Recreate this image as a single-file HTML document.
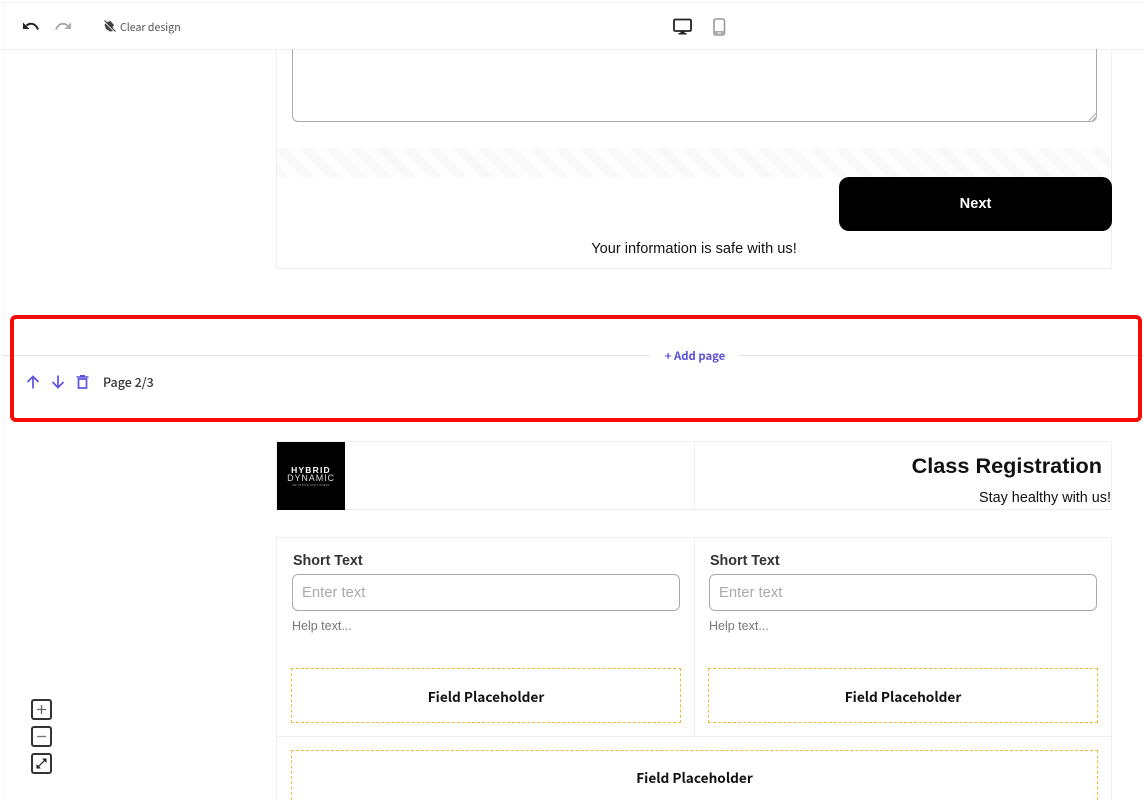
<!DOCTYPE html>
<html><head><meta charset="utf-8">
<style>
html,body{margin:0;padding:0;background:#fff;width:1144px;height:800px;overflow:hidden;}
#w{width:1144px;height:800px;position:relative;overflow:hidden;font-family:"Liberation Sans",sans-serif;filter:blur(.3px);background:#fff;}
.a{position:absolute;box-sizing:border-box;white-space:nowrap;}
.ui{font-family:"Noto Sans CJK SC","Liberation Sans",sans-serif;}
.box{border:1px solid #efefef;}
.lab{font-weight:bold;font-size:14.3px;color:#333;line-height:18px;}
.inp{height:37px;border:1.3px solid #aaa;border-radius:6px;background:#fff;color:#aaa;font-size:14.800px;line-height:36px;padding-left:9px;}
.help{font-size:12.500px;color:#777;line-height:16px;}
.ph{border:1px dashed #f5b93a;height:55px;text-align:center;font-weight:bold;font-size:13.650px;color:#111;line-height:55px;font-family:"Noto Sans CJK SC","Liberation Sans",sans-serif;}
svg{position:absolute;overflow:visible;}
.zb{left:31px;width:21px;height:21px;border:2px solid #333;border-radius:3px;background:#fff;}
</style></head><body><div id="w">

<!-- page edges -->
<div class="a" style="left:0;top:2px;width:1144px;height:1px;background:#f3f3f3"></div>
<div class="a" style="left:3px;top:0;width:1px;height:800px;background:#f7f7f7"></div>
<div class="a" style="left:0;top:49px;width:1144px;height:1px;background:#efefef"></div>

<!-- form part 1 -->
<div class="a box" style="left:276px;top:49px;width:836px;height:220px;border-top:0"></div>
<div class="a" style="left:292px;top:49px;width:805px;height:73px;border:1.3px solid #aaa;border-top:0;border-radius:0 0 6px 6px"></div>
<svg style="left:1089px;top:113px" width="8" height="8"><path d="M0 7.500L7.500 0M3.500 7.500L7.500 3.500" stroke="#aaa" stroke-width="1" fill="none"/></svg>
<div class="a" style="left:277px;top:148px;width:834px;height:29px;background:repeating-linear-gradient(45deg,#f9f9f9 0,#f9f9f9 9px,#fdfdfd 9px,#fdfdfd 18px)"></div>
<div class="a" style="left:839px;top:177px;width:273px;height:54px;background:#000;border-radius:10px;color:#fff;font-weight:bold;font-size:14.600px;text-align:center;line-height:54px">Next</div>
<div class="a" style="left:277px;top:240px;width:834px;text-align:center;font-size:14.600px;line-height:18px;color:#111">Your information is safe with us!</div>

<!-- toolbar -->
<div class="a" style="left:0;top:3px;width:1144px;height:46px;background:#fff"></div>
<div class="a" style="left:3px;top:3px;width:1px;height:46px;background:#f7f7f7"></div>
<svg style="left:22px;top:20px" width="18" height="14" viewBox="0 0 18 14"><path d="M4.500 5.500C8 2.500 13.500 3 16 9.500" stroke="#222" stroke-width="2" fill="none"/><path d="M1 2.500V9H7.500Z" fill="#222"/></svg>
<svg style="left:54px;top:20px" width="18" height="14" viewBox="0 0 18 14"><path d="M13.500 5.500C10 2.500 4.500 3 2 9.500" stroke="#aaa" stroke-width="2" fill="none"/><path d="M17 2.500V9H10.500Z" fill="#aaa"/></svg>
<svg style="left:103px;top:20px" width="13" height="13" viewBox="0 0 13 13"><path d="M3 2.500L7.500 1 11 5 9 8.500 11 11 7 11.500 3 9 1.500 5Z" fill="#444"/><path d="M1 1L12 12" stroke="#fff" stroke-width="1.300"/><path d="M1.500 .5L12.500 11.500" stroke="#333" stroke-width="1.100"/></svg>
<div class="a ui" style="left:120px;top:20px;font-size:10.600px;line-height:16px;color:#555">Clear design</div>
<svg style="left:673px;top:18px" width="19" height="18" viewBox="0 0 19 18"><rect x="1" y="1.500" width="17" height="11.500" rx="1.200" fill="#fff" stroke="#222" stroke-width="1.800"/><path d="M7.500 13H11.500V15H13.500V16.500H5.500V15H7.500Z" fill="#222"/></svg>
<svg style="left:713px;top:18px" width="13" height="18" viewBox="0 0 13 18"><rect x="1" y="1" width="10.500" height="16" rx="1.800" fill="#fff" stroke="#999" stroke-width="1.600"/><rect x="1" y="13" width="10.500" height="4" rx="1" fill="#aaa"/><rect x="4.500" y="14.500" width="3.500" height="1" fill="#fff"/></svg>

<!-- red highlighted divider -->
<div class="a" style="left:4px;top:355px;width:646px;height:1px;background:#e4e4e4"></div>
<div class="a" style="left:738px;top:355px;width:406px;height:1px;background:#e4e4e4"></div>
<div class="a ui" style="left:650px;top:348px;width:90px;text-align:center;font-size:11.300px;font-weight:bold;line-height:17px;color:#5a4fd8">+ Add page</div>
<svg style="left:26px;top:375px" width="14" height="14" viewBox="0 0 14 14"><path d="M7 13.500V1.500M1.500 7L7 1.500 12.500 7" stroke="#5b52dc" stroke-width="1.700" fill="none"/></svg>
<svg style="left:51px;top:375px" width="14" height="14" viewBox="0 0 14 14"><path d="M7 .5V12.500M1.500 7L7 12.500 12.500 7" stroke="#5b52dc" stroke-width="1.700" fill="none"/></svg>
<svg style="left:76px;top:375px" width="13" height="14" viewBox="0 0 13 14"><path d="M0.500 2H12.500M4 .8H9" stroke="#5b52dc" stroke-width="1.500" fill="none"/><rect x="2.500" y="4" width="8" height="9" fill="none" stroke="#5b52dc" stroke-width="1.700"/></svg>
<div class="a ui" style="left:103px;top:373px;font-size:12.500px;font-weight:500;line-height:17px;color:#333">Page 2/3</div>
<div class="a" style="left:10px;top:315px;width:1132px;height:107px;border:4px solid #f40a0a;border-radius:6px"></div>

<!-- header of page 2 -->
<div class="a box" style="left:276px;top:441px;width:419px;height:69px"></div>
<div class="a box" style="left:694px;top:441px;width:418px;height:69px"></div>
<div class="a" style="left:277px;top:442px;width:68px;height:68px;background:#000;color:#fff;text-align:center">
  <div style="font-size:8.500px;font-weight:bold;letter-spacing:1.200px;line-height:8px;margin-top:24px">HYBRID</div>
  <div style="font-size:9px;letter-spacing:.9px;line-height:9px;color:#ddd">DYNAMIC</div>
  <div style="font-size:2.500px;letter-spacing:.3px;line-height:5px;color:#aaa">WE STRIVE FOR FITNESS</div>
</div>
<div class="a" style="left:800px;top:453px;width:302px;text-align:right;font-size:21.700px;font-weight:bold;line-height:25px;color:#111">Class Registration</div>
<div class="a" style="left:800px;top:489px;width:311px;text-align:right;font-size:14.400px;line-height:18px;color:#111">Stay healthy with us!</div>

<!-- row -->
<div class="a box" style="left:276px;top:537px;width:419px;height:200px"></div>
<div class="a box" style="left:694px;top:537px;width:418px;height:200px"></div>
<div class="a box" style="left:276px;top:736px;width:836px;height:70px"></div>

<div class="a lab" style="left:293px;top:552px">Short Text</div>
<div class="a inp" style="left:292px;top:574px;width:388px">Enter text</div>
<div class="a help" style="left:292px;top:618px">Help text...</div>
<div class="a ph" style="left:291px;top:668px;width:390px">Field Placeholder</div>

<div class="a lab" style="left:710px;top:552px">Short Text</div>
<div class="a inp" style="left:709px;top:574px;width:388px">Enter text</div>
<div class="a help" style="left:709px;top:618px">Help text...</div>
<div class="a ph" style="left:708px;top:668px;width:390px">Field Placeholder</div>

<div class="a ph" style="left:291px;top:750px;width:807px;line-height:53px">Field Placeholder</div>

<!-- zoom controls -->
<div class="a zb" style="top:699px"></div>
<svg style="left:31px;top:699px" width="21" height="21"><path d="M10.500 6V15M6 10.500H15" stroke="#666" stroke-width="1.300"/></svg>
<div class="a zb" style="top:726px"></div>
<svg style="left:31px;top:726px" width="21" height="21"><path d="M6 10.500H15" stroke="#777" stroke-width="1.300"/></svg>
<div class="a zb" style="top:753px"></div>
<svg style="left:31px;top:753px" width="21" height="21"><path d="M6.500 14.500L14.500 6.500" stroke="#222" stroke-width="1.200"/><path d="M11 5.500H15.500V10ZM5.500 11V15.500H10Z" fill="#222"/></svg>

</div></body></html>
